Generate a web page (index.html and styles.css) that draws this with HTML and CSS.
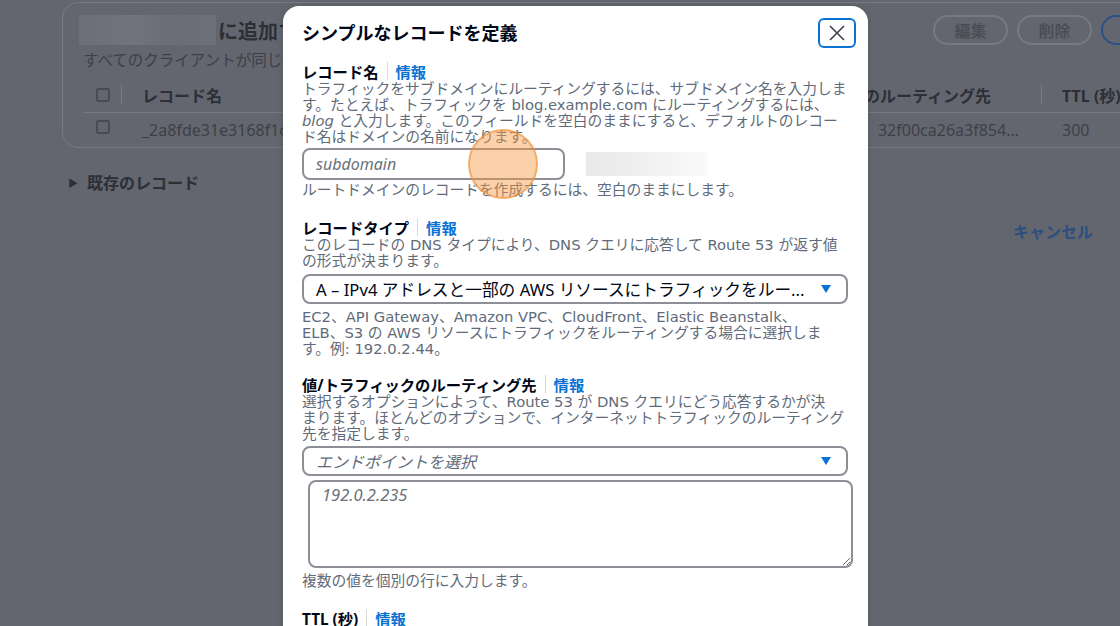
FILE: index.html
```html
<!DOCTYPE html>
<html lang="ja">
<head>
    <meta charset="UTF-8">
    <title>シンプルなレコードを定義</title>
    <link rel="stylesheet" href="styles.css">
</head>
<body>
    <!-- ページ本体 (モーダルの背後、暗く表示) -->
    <div class="page">
        <section class="card">
            <div class="card-head">
                <div class="title-row">
                    <span class="blur-name"></span>
                    <h2 class="card-title">に追加するレコード</h2>
                </div>
                <div class="actions">
                    <span class="pill">編集</span>
                    <span class="pill">削除</span>
                    <span class="pill pill-primary">レコードを追加</span>
                </div>
            </div>
            <p class="card-sub">すべてのクライアントが同じレコードを受け取ります。</p>

            <div class="table">
                <div class="tr th">
                    <div class="td"><span class="checkbox"></span></div>
                    <div class="td sep">レコード名</div>
                    <div class="td right">値/トラフィックのルーティング先</div>
                    <div class="td sep">TTL (秒)</div>
                </div>
                <div class="tr">
                    <div class="td"><span class="checkbox"></span></div>
                    <div class="td">_2a8fde31e3168f1c0b9d7e6a5f4c3b2a.example.com</div>
                    <div class="td right value">32f00ca26a3f854...</div>
                    <div class="td">300</div>
                </div>
            </div>
        </section>

        <div class="expander"><span class="tri">▶</span>既存のレコード</div>

        <div class="footer">
            <span class="link-btn">キャンセル</span>
        </div>
    </div>

    <!-- モーダル -->
    <div class="modal">
        <div class="modal-head">
            <h1 class="modal-title">シンプルなレコードを定義</h1>
            <button class="close" aria-label="閉じる">
                <svg width="18" height="18" viewBox="0 0 18 18"><path d="M2 2 L16 16 M16 2 L2 16" stroke="#414750" stroke-width="1.7" fill="none"/></svg>
            </button>
        </div>

        <div class="modal-body">
            <div class="field">
                <div class="label-row"><span>レコード名</span><span class="divider"></span><span class="info">情報</span></div>
                <p class="desc">トラフィックをサブドメインにルーティングするには、サブドメイン名を入力します。たとえば、トラフィックを blog.example.com にルーティングするには、<i>blog</i> と入力します。このフィールドを空白のままにすると、デフォルトのレコード名はドメインの名前になります。</p>
                <div class="input-row">
                    <input class="text-input" type="text" placeholder="subdomain">
                    <span class="blur-domain"></span>
                </div>
                <p class="desc hint">ルートドメインのレコードを作成するには、空白のままにします。</p>
            </div>

            <div class="field f-type">
                <div class="label-row"><span>レコードタイプ</span><span class="divider"></span><span class="info">情報</span></div>
                <p class="desc">このレコードの DNS タイプにより、DNS クエリに応答して Route 53 が返す値の形式が決まります。</p>
                <div class="select">
                    <span class="select-text">A – IPv4 アドレスと一部の AWS リソースにトラフィックをルー...</span>
                    <span class="caret"></span>
                </div>
                <p class="desc after-select">EC2、API Gateway、Amazon VPC、CloudFront、Elastic Beanstalk、<br>ELB、S3 の AWS リソースにトラフィックをルーティングする場合に選択しま<br>す。例: 192.0.2.44。</p>
            </div>

            <div class="field f-value">
                <div class="label-row"><span>値/トラフィックのルーティング先</span><span class="divider"></span><span class="info">情報</span></div>
                <p class="desc">選択するオプションによって、Route 53 が DNS クエリにどう応答するかが決<br>まります。ほとんどのオプションで、インターネットトラフィックのルーティング<br>先を指定します。</p>
                <div class="select select-endpoint">
                    <span class="select-text placeholder">エンドポイントを選択</span>
                    <span class="caret"></span>
                </div>
                <textarea class="textarea" placeholder="192.0.2.235"></textarea>
                <p class="desc hint2">複数の値を個別の行に入力します。</p>
            </div>

            <div class="field f-ttl">
                <div class="label-row"><span>TTL (秒)</span><span class="divider"></span><span class="info">情報</span></div>
            </div>
        </div>

        <!-- クリック位置のハイライト -->
        <span class="tap"></span>
    </div>
</body>
</html>
```

FILE: styles.css
```css
/* === BASE === */
* {
    margin: 0;
    padding: 0;
    box-sizing: border-box;
}

:root {
    --dim-bg: #63666f;
    --dim-line: #777a83;
    --dim-text: #2c2f35;
    --dim-soft: #3d4047;

    --text: #000716;
    --text-soft: #5f6b7a;
    --link: #0972d3;
    --border: #8c8f96;

    --fs-body: 14.75px;
}

html, body {
    height: 100%;
    overflow: hidden;
}

body {
    font-family: "Noto Sans", "Noto Sans CJK JP", sans-serif;
    background: var(--dim-bg);
    color: var(--text);
}

/* === PÁGINA DE FONDO === */
.page {
    width: 1300px;
    padding-left: 62px;
    padding-top: 2px;
}

.card {
    width: 1180px;
    border: 1px solid var(--dim-line);
    border-radius: 16px;
    padding: 12px 16px 0 20px;
}

.card-head {
    display: flex;
    align-items: center;
    height: 30px;
}

.title-row {
    flex: 0 0 854px;
    display: flex;
    align-items: center;
    margin-left: -4px;
}

.blur-name {
    width: 137px;
    height: 30px;
    background: linear-gradient(90deg, #6c6f78, #71747c 40%, #6a6d76 70%, #6d7079);
}

.card-title {
    font-size: 20px;
    font-weight: 700;
    color: var(--dim-text);
    margin-left: 2px;
    white-space: nowrap;
}

.actions {
    display: flex;
    gap: 9px;
}

.pill {
    height: 30px;
    min-width: 75px;
    padding: 0 16px;
    border: 2px solid var(--dim-line);
    border-radius: 15px;
    display: flex;
    align-items: center;
    justify-content: center;
    font-size: 16px;
    font-weight: 700;
    color: #4b4e56;
    white-space: nowrap;
}

.pill-primary {
    border-color: #2b4f86;
    color: #2b4f86;
}

.card-sub {
    margin-top: 7px;
    font-size: 15.5px;
    line-height: 16px;
    color: var(--dim-soft);
    white-space: nowrap;
}

.table {
    margin-top: 10px;
}

.tr {
    display: grid;
    grid-template-columns: 38px 500px 420px 1fr;
    height: 34px;
    align-items: center;
    font-size: 16px;
    color: var(--dim-soft);
}

.th {
    height: 35px;
    font-weight: 700;
    color: var(--dim-text);
    border-bottom: 1px solid var(--dim-line);
}

.td {
    position: relative;
    padding-left: 21px;
    white-space: nowrap;
    overflow: hidden;
}

.td:first-child {
    padding-left: 13px;
    display: flex;
    align-items: center;
}

.tr:not(.th) .td:first-child {
    align-self: start;
    padding-top: 7px;
}

.th .sep::before {
    content: "";
    position: absolute;
    left: 0;
    top: 2px;
    bottom: 2px;
    border-left: 1px solid var(--dim-line);
}

.th .right {
    text-align: right;
    padding-right: 50px;
}

.value {
    text-align: right;
    padding-right: 22px;
}

.checkbox {
    width: 14px;
    height: 14px;
    border: 2px solid #484b53;
    border-radius: 3px;
}

.expander {
    margin-top: 24px;
    margin-left: 6px;
    display: flex;
    align-items: center;
    height: 20px;
    font-size: 16px;
    font-weight: 700;
    color: var(--dim-text);
}

.tri {
    font-size: 10px;
    margin-right: 9px;
}

.footer {
    width: 1031px;
    display: flex;
    justify-content: flex-end;
    margin-top: 30px;
}

.link-btn {
    font-size: 16px;
    font-weight: 700;
    color: #2c4f80;
    line-height: 20px;
}

/* === MODAL === */
.modal {
    position: absolute;
    left: 283px;
    top: 6px;
    width: 585px;
    height: 660px;
    background: #fff;
    border-radius: 16px 16px 0 0;
    box-shadow: 0 1px 6px rgba(0, 0, 0, 0.15);
}

.modal-head {
    display: flex;
    align-items: center;
    justify-content: space-between;
    padding: 12px 12px 0 19px;
}

.modal-title {
    font-size: 18px;
    font-weight: 700;
    line-height: 24px;
    color: var(--text);
}

.close {
    width: 38px;
    height: 30px;
    border: 2px solid var(--link);
    border-radius: 6px;
    background: #fff;
    display: flex;
    align-items: center;
    justify-content: center;
}

.modal-body {
    padding: 13px 20px 0 19px;
}

.f-type { margin-top: 19px; }
.f-value { margin-top: 17px; }
.f-ttl { margin-top: 19px; }

.label-row {
    display: flex;
    align-items: center;
    height: 20px;
    font-size: 15.3px;
    font-weight: 700;
    color: var(--text);
}

.divider {
    width: 1px;
    height: 18px;
    background: #d5dbdb;
    margin: 0 8px;
}

.info {
    color: var(--link);
}

/* texto de ayuda: latín un poco más ancho, como en la fuente original */
.desc {
    font-family: "DejaVu Sans", "Noto Sans CJK JP", sans-serif;
    font-size: var(--fs-body);
    line-height: 16px;
    color: var(--text-soft);
    margin-right: -3px;
}

.desc i {
    font-style: italic;
}

.input-row {
    display: flex;
    align-items: center;
    gap: 21px;
    margin-top: 3px;
}

.text-input {
    width: 263px;
    height: 32px;
    border: 2px solid var(--border);
    border-radius: 8px;
    padding: 0 12px;
    font: inherit;
    font-size: 16px;
    outline: none;
}

.text-input::placeholder,
.textarea::placeholder {
    color: #6b717b;
    font-style: italic;
}

.blur-domain {
    width: 122px;
    height: 24px;
    background: linear-gradient(90deg, #e9e9ea, #efeff0 45%, #f6f6f6 75%, #fafafa);
}

.hint {
    margin-top: 2px;
}

.select {
    margin-top: 5px;
    height: 30px;
    border: 2px solid var(--border);
    border-radius: 8px;
    padding: 0 15px 0 12px;
    display: flex;
    align-items: center;
    justify-content: space-between;
    font-size: 16.7px;
    color: var(--text);
}

.select-endpoint {
    margin-top: 4px;
    font-size: 16px;
}

.placeholder {
    font-style: italic;
    color: var(--text-soft);
}

.caret {
    width: 0;
    height: 0;
    border-left: 5.5px solid transparent;
    border-right: 5.5px solid transparent;
    border-top: 8px solid var(--link);
}

.after-select {
    margin-top: 5px;
}

.textarea {
    display: block;
    margin: 4px 0 0 6px;
    width: 545px;
    height: 88px;
    border: 2px solid var(--border);
    border-radius: 8px;
    padding: 1px 12px;
    font: inherit;
    font-size: 16.5px;
    resize: vertical;
    outline: none;
}

.hint2 {
    margin-top: 5px;
}

.tap {
    position: absolute;
    left: 185px;
    top: 123px;
    width: 70px;
    height: 70px;
    border-radius: 50%;
    background: rgba(246, 152, 66, 0.45);
    border: 2px solid rgba(240, 140, 50, 0.55);
}
```
